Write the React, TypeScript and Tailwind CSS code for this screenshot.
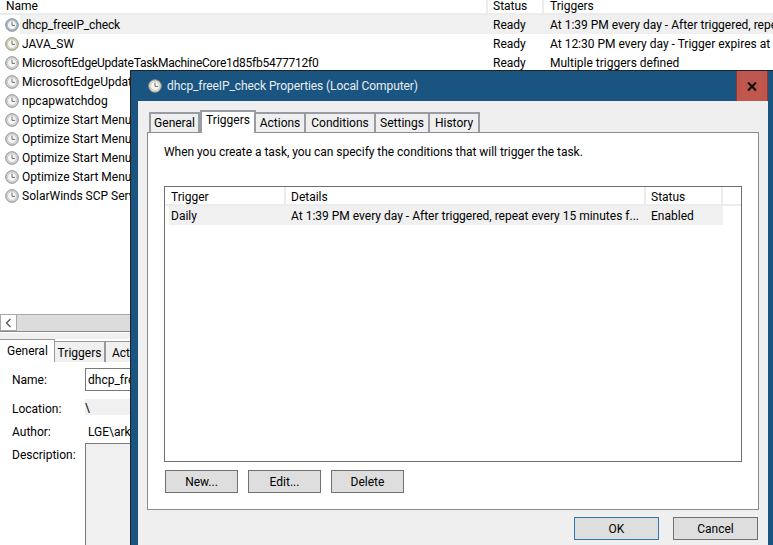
import React from 'react';

const font = 'font-["Roboto",sans-serif]';

const tasks = [
    { name: 'dhcp_freeIP_check', status: 'Ready', trigger: 'At 1:39 PM every day - After triggered, repeat every 15 minutes for a duration of 1 day.', tint: '#9dbcd8', selected: true, tight: 'tracking-[-0.15px]' },
    { name: 'JAVA_SW', status: 'Ready', trigger: 'At 12:30 PM every day - Trigger expires at 9/30/2021', tint: '#e2d6a8' },
    { name: 'MicrosoftEdgeUpdateTaskMachineCore1d85fb5477712f0', status: 'Ready', trigger: 'Multiple triggers defined', tint: '#d8d8d8', tight: 'tracking-[-0.245px]' },
    { name: 'MicrosoftEdgeUpdateTaskMachineUA', status: '', trigger: '', tint: '#d8d8d8' },
    { name: 'npcapwatchdog', status: '', trigger: '', tint: '#d8d8d8' },
    { name: 'Optimize Start Menu Cache', status: '', trigger: '', tint: '#d8d8d8' },
    { name: 'Optimize Start Menu Cache', status: '', trigger: '', tint: '#d8d8d8' },
    { name: 'Optimize Start Menu Cache', status: '', trigger: '', tint: '#d8d8d8' },
    { name: 'Optimize Start Menu Cache', status: '', trigger: '', tint: '#d8d8d8' },
    { name: 'SolarWinds SCP Server', status: '', trigger: '', tint: '#d8d8d8' },
];

const dialogTabs = [
    { label: 'General', width: 'w-[51px]' },
    { label: 'Triggers', width: 'w-[56px]', active: true },
    { label: 'Actions', width: 'w-[50px]' },
    { label: 'Conditions', width: 'w-[70px]' },
    { label: 'Settings', width: 'w-[54px]' },
    { label: 'History', width: 'w-[50px]' },
];

const ClockIcon = ({ face = '#d8d8d8' }: { face?: string }) => (
    <svg width="14" height="14" viewBox="0 0 14 14" className="shrink-0">
        <circle cx="7" cy="7" r="6.3" fill={face} stroke="#8a8a8a" strokeWidth="1" />
        <circle cx="7" cy="7" r="4.4" fill="#f6f6f2" stroke="#b5b5b5" strokeWidth="0.5" />
        <path d="M7 3.6V7.4H10" fill="none" stroke="#6f6f6f" strokeWidth="1" />
    </svg>
);

const BackWindow = () => (
    <div className="flex flex-col h-full text-[12px] leading-none text-black">
        <div className="flex h-[15px] bg-white border-b-2 border-[#ececec] shrink-0">
            <div className="w-[488px] pl-[6px] border-r-2 border-[#ececec]">Name</div>
            <div className="w-[56px] pl-[5px] border-r-2 border-[#ececec]">Status</div>
            <div className="pl-[6px]">Triggers</div>
        </div>
        <div className="h-[299px] shrink-0 overflow-hidden">
            {tasks.map((task, i) => (
                <div key={i} className="flex items-center h-[19px] whitespace-nowrap">
                    <div className="w-[20px] pl-[5px] shrink-0">
                        <ClockIcon face={task.tint} />
                    </div>
                    <div className={`flex items-center flex-1 h-full ${task.selected ? 'bg-[#f0f0f0]' : ''}`}>
                        <div className={`w-[468px] pl-[2px] shrink-0 ${task.tight ?? ''}`}>{task.name}</div>
                        <div className="w-[57px] pl-[5px] shrink-0">{task.status}</div>
                        <div className="pl-[5px]">{task.trigger}</div>
                    </div>
                </div>
            ))}
        </div>
        <div className="flex h-[18px] shrink-0 border-b border-[#8a8a8a]">
            <div className="flex items-center justify-center w-[17px] border border-[#a8a8a8] bg-white">
                <svg width="7" height="10" viewBox="0 0 7 10">
                    <path d="M5.5 1L1.5 5L5.5 9" fill="none" stroke="#555" strokeWidth="1.3" />
                </svg>
            </div>
            <div className="flex-1 bg-[#dcdcdc] border-t border-[#a8a8a8]" />
        </div>
        <div className="h-[7px] shrink-0 border-t border-white bg-[#f0f0f0]" />
        <div className="flex items-end h-[23px] shrink-0">
            <div className="flex items-center w-[55px] h-full pl-[7px] pb-[1px] border-t border-r border-[#999] bg-white">General</div>
            <div className="flex items-center justify-center w-[51px] h-[21px] pt-[1px] bg-[#f0f0f0] border-t border-r-2 border-[#999]">Triggers</div>
            <div className="flex items-center w-[60px] h-[21px] pt-[1px] pl-[6px] bg-[#f0f0f0] border-t border-[#999]">Actions</div>
        </div>
        <div className="grid grid-cols-[85px_1fr] items-center pt-[6px]">
            <div className="pl-[12px]">Name:</div>
            <div className="flex items-center h-[23px] pl-[2px] border border-[#7a7a7a]">dhcp_freeIP_check</div>
            <div className="pl-[12px] mt-[11px]">Location:</div>
            <div className="flex items-center h-[16px] mt-[8px] pt-[1px] bg-[#f0f0f0]">\</div>
            <div className="pl-[12px] mt-[11px] h-[14px]">Author:</div>
            <div className="pl-[3px] mt-[11px] h-[14px]">LGE\arkadmin</div>
            <div className="self-start pl-[12px] mt-[3px] pt-[6px]">Description:</div>
            <div className="h-[120px] mt-[3px] bg-[#f0f0f0] border border-[#7a7a7a]" />
        </div>
    </div>
);

const Btn = ({ label, className = '' }: { label: string; className?: string }) => (
    <button className={`h-[23px] bg-[#dedede] border border-[#707070] text-[12px] leading-none text-black ${className}`}>
        {label}
    </button>
);

const PropertiesDialog = () => (
    <div className="absolute left-[130px] top-[70px] w-[660px] h-[490px] border border-[#222] bg-[#1a5480] text-[12px] leading-none text-black">
        <div className="flex items-center h-[30px] w-[637px] pl-[17px] text-[#e8eef4]">
            <ClockIcon face="#e9e4d0" />
            <span className="ml-[5px] tracking-[-0.09px]">dhcp_freeIP_check Properties (Local Computer)</span>
            <div className="flex items-center justify-center ml-auto w-[32px] h-full bg-[#c0574f] border-x border-[#8a3a34]">
                <svg width="10" height="9" viewBox="0 0 10 9">
                    <path d="M1 0.5L9 8.5M9 0.5L1 8.5" stroke="#111" strokeWidth="2.2" />
                </svg>
            </div>
        </div>
        <div className="ml-[7px] w-[630px] h-[460px] bg-[#efefef] pt-[9px] pl-[9px]">
            <div className="flex items-end h-[22px] pl-[2px]">
                {dialogTabs.map((tab) => (
                    <div
                        key={tab.label}
                        className={`flex items-center justify-center border-t-2 border-l-0 border-r-2 border-[#9a9ca3] ${tab.width} ${
                            tab.active ? 'relative z-10 h-[23px] bg-white pb-[5px] border-l-2 -mb-px' : 'h-[20px] bg-[#efefef]'
                        } ${tab.label === 'General' ? 'border-l-2' : ''}`}
                    >
                        {tab.label}
                    </div>
                ))}
            </div>
            <div className="flex flex-col w-[612px] h-[378px] bg-white border border-[#8a8c92] pl-[16px]">
                <p className="mt-[13px] h-[14px] tracking-[-0.04px]">When you create a task, you can specify the conditions that will trigger the task.</p>
                <div className="flex flex-col w-[578px] h-[276px] mt-[26px] border border-[#6e6e6e]">
                    <div className="flex h-[19px] shrink-0 border-b-2 border-[#ececec]">
                        <div className="w-[121px] pl-[6px] pt-[4px] border-r-2 border-[#ececec]">Trigger</div>
                        <div className="w-[360px] pl-[5px] pt-[4px] border-r-2 border-[#ececec]">Details</div>
                        <div className="w-[77px] pl-[5px] pt-[4px] border-r-2 border-[#ececec]">Status</div>
                    </div>
                    <div className="flex items-center w-[554px] h-[19px] ml-[4px] bg-[#f0f0f0] whitespace-nowrap">
                        <div className="w-[118px] pl-[2px]">Daily</div>
                        <div className="w-[360px] pl-[4px]">At 1:39 PM every day - After triggered, repeat every 15 minutes f...</div>
                        <div className="pl-[4px]">Enabled</div>
                    </div>
                </div>
                <div className="flex gap-[10px] mt-[8px] ml-[1px]">
                    <Btn label="New..." className="w-[73px]" />
                    <Btn label="Edit..." className="w-[73px]" />
                    <Btn label="Delete" className="w-[73px]" />
                </div>
            </div>
            <div className="flex justify-end gap-[14px] w-[611px] mt-[7px]">
                <Btn label="OK" className="w-[85px] !border-[#2f78ab]" />
                <Btn label="Cancel" className="w-[85px]" />
            </div>
        </div>
    </div>
);

const App = () => {
    return (
        <div className={`relative w-[773px] h-[545px] overflow-hidden bg-white ${font}`}>
            <BackWindow />
            <PropertiesDialog />
        </div>
    );
};

export default App;
